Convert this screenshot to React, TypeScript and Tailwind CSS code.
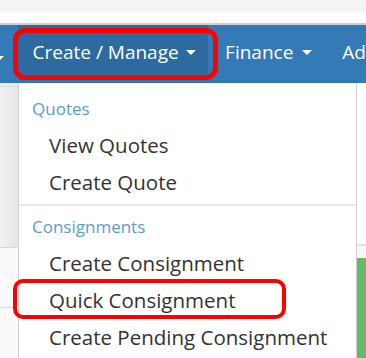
import { Fragment } from 'react';

const font = { fontFamily: '"Open Sans", "Noto Sans", Arial, sans-serif' };

const sections = [
    { title: 'Quotes', items: ['View Quotes', 'Create Quote'] },
    { title: 'Consignments', items: ['Create Consignment', 'Quick Consignment', 'Create Pending Consignment'] },
];

function Caret() {
    return <span className="inline-block w-0 h-0 border-l-[5px] border-r-[5px] border-t-[5px] border-l-transparent border-r-transparent border-t-white" />;
}

export default function App() {
    return (
        <div className="relative w-[366px] h-[358px] overflow-hidden bg-white" style={font}>
            {/* page header strip */}
            <div className="h-[13px] bg-[#f4f4f4]" />
            <div className="h-[10px] bg-white" />
            <div className="h-[2px] bg-[#cfcfcf]" />

            {/* navbar */}
            <nav className="flex items-stretch h-[58px] bg-[#337ab7] text-white text-[19px]">
                <div className="w-[18px] flex items-center">
                    <span className="-ml-[6px]"><Caret /></span>
                </div>
                <div className="w-[195px] mb-[3px] bg-[#2c6a9f] flex items-center gap-[7px] pl-[15px]">
                    <span>Create / Manage</span>
                    <Caret />
                </div>
                <div className="flex items-center gap-[9px] pl-[17px] pb-[3px]">
                    <span>Finance</span>
                    <Caret />
                </div>
                <div className="flex items-center pl-[30px] pb-[3px]">
                    <span>Ad</span>
                </div>
            </nav>

            {/* body */}
            <div className="flex h-[275px]">
                <div className="w-[18px] flex flex-col bg-gradient-to-r from-[#f2f2f2] to-[#e6e6e6]">
                    <div className="h-[3px]" />
                    <div className="h-[1px] bg-[#dcdcdc]" />
                    <div className="h-[160px]" />
                    <div className="h-[1px] bg-[#d6d6d6]" />
                    <div className="h-[59px] bg-[#fafafa]" />
                    <div className="h-[1px] bg-[#dcdcdc]" />
                    <div className="flex-1 bg-[#fafafa]" />
                </div>

                <div className="w-[339px] bg-white border-l border-r border-[#d0d0d0] pt-[7px] shadow-[2px_0_3px_rgba(0,0,0,0.12)]">
                    {sections.map((s, i) => (
                        <Fragment key={s.title}>
                            {i > 0 && <div className="mt-[3px] mb-[2px] h-[2px] bg-[#e8e8e8]" />}
                            <div className="h-[37px] flex items-center pl-[13px] text-[17px] text-[#5b9bd1]">{s.title}</div>
                            {s.items.map(item => (
                                <div key={item} className="h-[37px] flex items-center pl-[30px] text-[20.5px] text-[#333333]">
                                    {item}
                                </div>
                            ))}
                        </Fragment>
                    ))}
                </div>

                <div className="flex-1 flex flex-col bg-white">
                    <div className="h-[161px] bg-[#fdfdfd]" />
                    <div className="h-[2px] bg-[#e2e2e2]" />
                    <div className="h-[12px] bg-[#f8f8f8]" />
                    <div className="flex-1 bg-[#66bb6a]" />
                </div>
            </div>

            {/* annotation boxes */}
            <div className="absolute left-[13px] top-[28px] w-[205px] h-[52px] rounded-[12px] border-[5px] border-[#ff0000]" />
            <div className="absolute left-[13px] top-[279px] w-[273px] h-[40px] rounded-[10px] border-[4px] border-[#ff0000]" />
        </div>
    );
}
